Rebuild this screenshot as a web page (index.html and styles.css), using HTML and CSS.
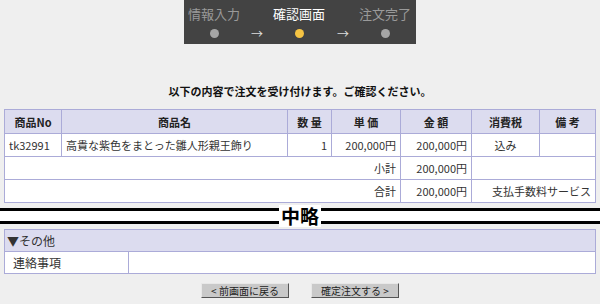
FILE: index.html
```html
<!DOCTYPE html>
<html lang="ja">
<head>
<meta charset="UTF-8">
<title>注文内容の確認</title>
<link rel="stylesheet" href="styles.css">
</head>
<body>

<div class="steps">
  <div class="step">
    <span class="step__label">情報入力</span>
    <span class="step__dot"></span>
  </div>
  <div class="step__arrow">→</div>
  <div class="step step--current">
    <span class="step__label">確認画面</span>
    <span class="step__dot"></span>
  </div>
  <div class="step__arrow">→</div>
  <div class="step">
    <span class="step__label">注文完了</span>
    <span class="step__dot"></span>
  </div>
</div>

<p class="lead">以下の内容で注文を受け付けます。ご確認ください。</p>

<table class="order">
  <colgroup>
    <col style="width:57px"><col style="width:226px"><col style="width:44px"><col style="width:69px">
    <col style="width:71px"><col style="width:68px"><col>
  </colgroup>
  <tr>
    <th>商品No</th><th>商品名</th><th>数 量</th><th>単 価</th><th>金 額</th><th>消費税</th><th>備 考</th>
  </tr>
  <tr>
    <td>tk32991</td>
    <td>高貴な紫色をまとった雛人形親王飾り</td>
    <td class="num">1</td>
    <td class="num">200,000円</td>
    <td class="num">200,000円</td>
    <td class="center">込み</td>
    <td></td>
  </tr>
  <tr>
    <td colspan="4" class="num">小計</td>
    <td class="num">200,000円</td>
    <td colspan="2"></td>
  </tr>
  <tr>
    <td colspan="4" class="num">合計</td>
    <td class="num">200,000円</td>
    <td colspan="2" class="num">支払手数料サービス</td>
  </tr>
</table>

<div class="omit">
  <span class="omit__text">中略</span>
</div>

<table class="other">
  <colgroup>
    <col style="width:124px"><col>
  </colgroup>
  <tr>
    <th colspan="2">▼その他</th>
  </tr>
  <tr>
    <td class="other__label">連絡事項</td>
    <td></td>
  </tr>
</table>

<div class="actions">
  <button class="btn">&lt; 前画面に戻る</button>
  <button class="btn">確定注文する &gt;</button>
</div>

</body>
</html>
```

FILE: styles.css
```css
body {
  margin: 0;
  background: #efefef;
  font-family: "Noto Sans CJK JP", "DejaVu Sans", sans-serif;
  font-size: 11px;
  color: #333;
}

/* step indicator */
.steps {
  width: 232px;
  height: 44px;
  margin: 0 auto;
  background: #434343;
  display: grid;
  grid-template-columns: 60px 26px 58px 30px 54px;
  align-items: start;
  padding-top: 5px;
  box-sizing: border-box;
}

.step {
  display: flex;
  flex-direction: column;
  align-items: center;
  gap: 6px;
}

.step__label {
  font-size: 13px;
  line-height: 18px;
  color: #9a9a9a;
}

.step__dot {
  width: 9px;
  height: 9px;
  border-radius: 50%;
  background: #a6a6a6;
}

.step--current .step__label {
  color: #fff;
}

.step--current .step__dot {
  background: #f6c443;
}

.step__arrow {
  color: #ddd;
  font-size: 12px;
  text-align: center;
  padding-top: 22px;
  line-height: 14px;
}

.lead {
  margin: 39px 0 0;
  text-align: center;
  font-weight: bold;
  font-size: 11px;
  line-height: 16px;
  color: #111;
}

/* tables */
table {
  border-collapse: collapse;
  width: 592px;
  margin: 0 4px;
  table-layout: fixed;
  background: #fff;
}

th, td {
  border: 1px solid #ababd8;
  padding: 0 4px;
  white-space: nowrap;
  overflow: hidden;
  line-height: 16px;
}

.order {
  margin-top: 10px;
}

.order th {
  height: 23px;
  background: #dcdcef;
  font-size: 11px;
  color: #222;
}

.order td {
  height: 22px;
}

.num {
  text-align: right;
}

.center {
  text-align: center;
}

/* 中略 divider */
.omit {
  margin-top: 5px;
  height: 10px;
  border-top: 3px solid #000;
  border-bottom: 3px solid #000;
  background: #fff;
  display: flex;
  justify-content: center;
  align-items: center;
}

.omit__text {
  background: #fff;
  font-size: 19px;
  font-weight: bold;
  color: #000;
  padding: 0 2px;
  line-height: 22px;
}

.other {
  margin-top: 5px;
}

.other th {
  height: 21px;
  background: #dcdcef;
  text-align: left;
  font-weight: normal;
  font-size: 12px;
  color: #333;
  padding: 0 2px;
}

.other td {
  height: 21px;
}

.other__label {
  font-size: 12px;
  padding-left: 8px;
}

/* buttons */
.actions {
  display: flex;
  justify-content: center;
  gap: 22px;
  margin-top: 9px;
}

.btn {
  width: 88px;
  height: 15px;
  padding: 0;
  font-family: inherit;
  font-size: 10px;
  line-height: 12px;
  color: #222;
  background: #c9c9c9;
  border: 1px solid;
  border-color: #e8e8e8 #555 #555 #e8e8e8;
}
```
